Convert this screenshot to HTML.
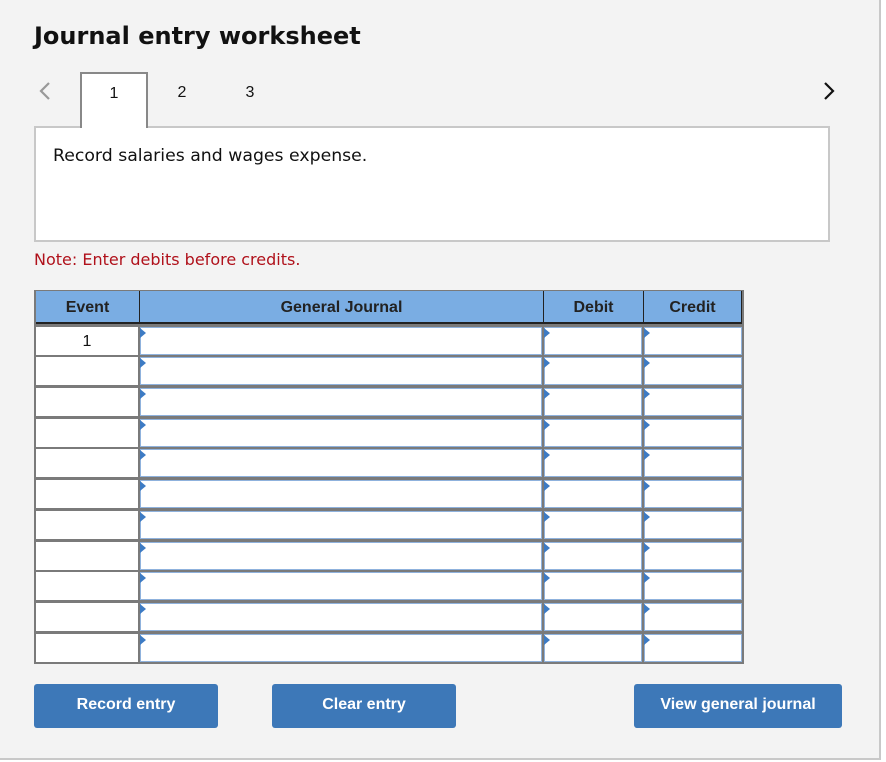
<!DOCTYPE html>
<html><head><style>
*{box-sizing:border-box;margin:0;padding:0}
body{width:886px;height:762px;background:#fff;font-family:"Liberation Sans",Arial,sans-serif;position:relative;overflow:hidden}
.page{position:absolute;left:0;top:0;width:881px;height:760px;background:#f3f3f3;border-right:2px solid #c8c8c8;border-bottom:2px solid #c8c8c8}
.abs{position:absolute}
h1{position:absolute;left:34px;top:22px;font-family:"DejaVu Sans",Verdana,sans-serif;font-size:24px;font-weight:bold;color:#111}
.tab{position:absolute;top:72px;width:68px;height:56px;text-align:center;font-family:"Liberation Sans",Arial,sans-serif;font-size:16px;line-height:42px;color:#111}
.box{position:absolute;left:34px;top:126px;width:796px;height:116px;background:#fff;border:2px solid #c8c8c8;font-family:"DejaVu Sans",Verdana,sans-serif;font-size:17.3px;color:#111;padding:18px 17px}
.note{position:absolute;left:34px;top:250px;font-family:"DejaVu Sans",Verdana,sans-serif;font-size:16px;color:#b0111b}
.grid{position:absolute;left:34px;top:290px;width:710px;height:374px;background:#7a7a7a;padding:1px 2px 2px 2px;display:grid;grid-template-columns:102px 402px 98px 98px;grid-template-rows:33px repeat(11,28px);column-gap:2px;row-gap:2.7px}
.h{background:#7aade3;font-weight:bold;font-size:16px;color:#222;text-align:center;line-height:33px;border-right:1px solid #222;border-bottom:2px solid #222;margin-right:-2px}
.e{background:#fff;text-align:center;font-family:"Liberation Sans",Arial,sans-serif;font-size:16px;line-height:30px;color:#111}
.i{background:#fff;border:1.5px solid #8fb2dd;position:relative}
.i:before{content:"";position:absolute;left:-1px;top:0;border-top:5px solid transparent;border-bottom:5px solid transparent;border-left:6px solid #3d7bc4}
.btn{position:absolute;top:684px;height:44px;background:#3d78b8;border-radius:3px;color:#fff;font-weight:bold;font-size:16px;text-align:center;line-height:42px}
</style></head><body>
<div class="page">
<h1>Journal entry worksheet</h1>
<svg class="abs" style="left:38px;top:81px" width="14" height="20"><path d="M11 2 L3 10 L11 18" stroke="#999" stroke-width="2.2" fill="none"/></svg>
<svg class="abs" style="left:822px;top:81px" width="14" height="20"><path d="M3 2 L11 10 L3 18" stroke="#111" stroke-width="2.2" fill="none"/></svg>
<div class="box">Record salaries and wages expense.</div>
<div class="tab" style="left:80px;background:#fff;border:2px solid #888;border-bottom:none;line-height:40px">1</div>
<div class="tab" style="left:148px">2</div>
<div class="tab" style="left:216px">3</div>
<div class="note">Note: Enter debits before credits.</div>
<div class="grid">
<div class="h">Event</div><div class="h">General Journal</div><div class="h">Debit</div><div class="h" style="margin-right:0">Credit</div>
<div class="e">1</div><div class="i"></div><div class="i"></div><div class="i"></div>
<div class="e"></div><div class="i"></div><div class="i"></div><div class="i"></div>
<div class="e"></div><div class="i"></div><div class="i"></div><div class="i"></div>
<div class="e"></div><div class="i"></div><div class="i"></div><div class="i"></div>
<div class="e"></div><div class="i"></div><div class="i"></div><div class="i"></div>
<div class="e"></div><div class="i"></div><div class="i"></div><div class="i"></div>
<div class="e"></div><div class="i"></div><div class="i"></div><div class="i"></div>
<div class="e"></div><div class="i"></div><div class="i"></div><div class="i"></div>
<div class="e"></div><div class="i"></div><div class="i"></div><div class="i"></div>
<div class="e"></div><div class="i"></div><div class="i"></div><div class="i"></div>
<div class="e"></div><div class="i"></div><div class="i"></div><div class="i"></div>
</div>
<div class="btn" style="left:34px;width:184px">Record entry</div>
<div class="btn" style="left:272px;width:184px">Clear entry</div>
<div class="btn" style="left:634px;width:208px">View general journal</div>
</div>
</body></html>
